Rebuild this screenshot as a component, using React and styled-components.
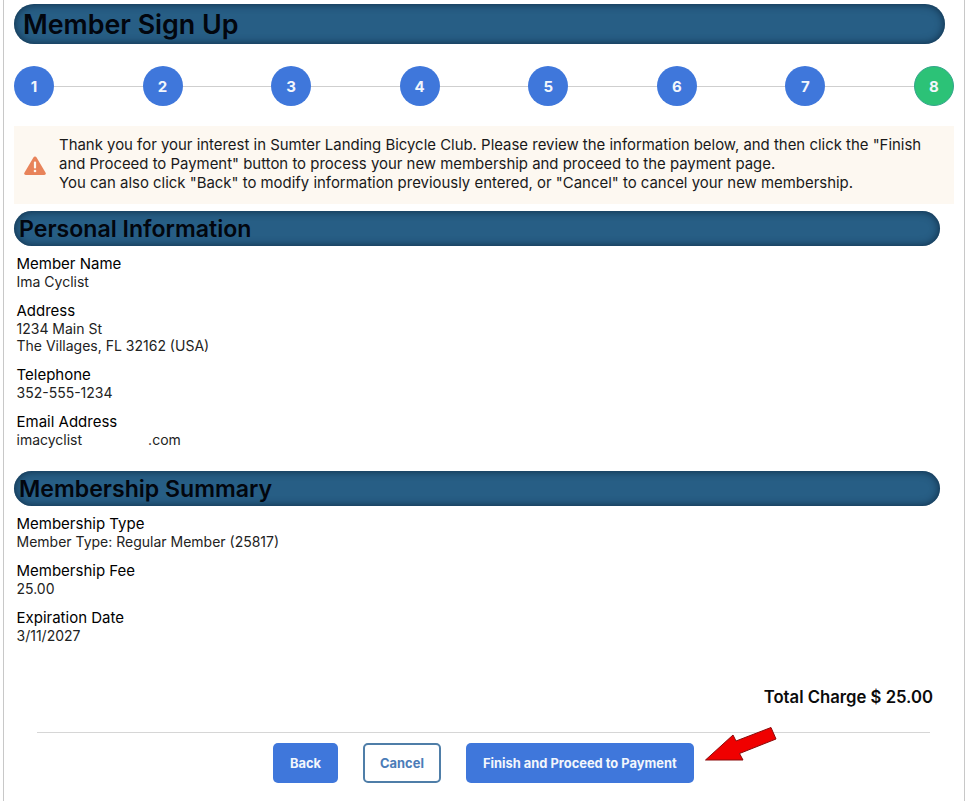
import React from 'react';
import styled, { createGlobalStyle } from 'styled-components';

const GlobalStyle = createGlobalStyle`
  html, body {
    margin: 0;
    padding: 0;
    background: #fff;
    overflow: hidden;
  }

  body {
    font-family: Inter, "Liberation Sans", sans-serif;
    color: #111;
  }
`;

const Frame = styled.div`
  position: relative;
  box-sizing: border-box;
  width: 962px;
  height: 801px;
  margin-left: 3px;
  padding: 4px 10px 0;
  border-left: 1px solid #c8c8c8;
  border-right: 1px solid #c8c8c8;
`;

const Banner = styled.div`
  box-sizing: border-box;
  display: flex;
  align-items: center;
  width: ${(p) => (p.$main ? '931px' : '926px')};
  height: ${(p) => (p.$main ? '40px' : '35px')};
  padding-left: ${(p) => (p.$main ? '9px' : '5px')};
  border-radius: 20px;
  background: #275e85;
  box-shadow: inset 0 0 9px rgba(5, 25, 45, 0.75);
  color: #02060e;
  font-size: ${(p) => (p.$main ? '26.8px' : '23.1px')};
  font-weight: 600;
  white-space: nowrap;
`;

const Steps = styled.div`
  display: flex;
  justify-content: space-between;
  width: 940px;
  margin-top: 22px;
  background: linear-gradient(#cfcfcf, #cfcfcf) center / 100% 1px no-repeat;
`;

const Step = styled.div`
  box-sizing: border-box;
  display: flex;
  align-items: center;
  justify-content: center;
  width: 40px;
  height: 40px;
  border-radius: 50%;
  background: ${(p) => (p.$done ? '#2cc277' : '#3f77db')};
  border: ${(p) => (p.$done ? '1px solid #35a58c' : 'none')};
  color: #f2f6fc;
  font-size: 15px;
  font-weight: 700;
`;

const Alert = styled.div`
  box-sizing: border-box;
  display: flex;
  align-items: center;
  gap: 13px;
  width: 940px;
  height: 78px;
  margin-top: 20px;
  padding-left: 10px;
  background: #fdf8f1;
  font-size: 14.93px;
  line-height: 19px;
  color: #1a1a1a;
  white-space: nowrap;
`;

const AlertText = styled.div`
  margin-bottom: 2px;
`;

const Section = styled.div`
  margin-top: ${(p) => p.$gap || 7}px;
`;

const Fields = styled.dl`
  display: flex;
  flex-direction: column;
  gap: 12px;
  margin: 9px 0 0 2.5px;
`;

const Field = styled.div`
  line-height: 17px;
`;

const Label = styled.dt`
  font-size: 15px;
  line-height: 18px;
  font-weight: 400;
  color: #000;
`;

const Value = styled.dd`
  margin: 0;
  font-size: 14px;
  color: #222;
`;

const Masked = styled.span`
  display: inline-block;
  width: 66px;
`;

const Total = styled.div`
  width: 919px;
  margin-top: 43px;
  text-align: right;
  font-size: 16.7px;
  line-height: 20px;
  font-weight: 600;
  color: #0b0b0b;
`;

const Rule = styled.hr`
  width: 893px;
  height: 1px;
  margin: 25px 0 0 23px;
  border: none;
  background: #d6d6d6;
`;

const Actions = styled.div`
  display: flex;
  gap: 25px;
  margin: 10px 0 0 259px;
`;

const Button = styled.button`
  box-sizing: border-box;
  height: 40px;
  padding: 0 ${(p) => (p.$outline ? '15px' : '17px')};
  border-radius: 5px;
  border: ${(p) => (p.$outline ? '2px solid #4f7ea8' : 'none')};
  background: ${(p) => (p.$outline ? '#fff' : '#3f77db')};
  color: ${(p) => (p.$outline ? '#4b7cb8' : '#f2f6fc')};
  font-family: inherit;
  font-size: 12.9px;
  font-weight: 700;
`;

const Arrow = styled.svg`
  position: absolute;
  left: 697px;
  top: 722px;
`;

const WarningIcon = () => (
  <svg width="22" height="19" viewBox="0 0 22 19" aria-hidden="true">
    <path
      d="M11 0.5c.7 0 1.2.3 1.6 1l9 15.2c.7 1.1-.1 2.3-1.4 2.3H1.8C.5 19-.3 17.800.4 16.700l9-15.200c.4-.7.9-1 1.600-1z"
      fill="#e8835a"
    />
    <rect x="9.900" y="5.500" width="2.200" height="7" rx="1" fill="#fdf8f1" />
    <circle cx="11" cy="15" r="1.300" fill="#fdf8f1" />
  </svg>
);

const steps = [1, 2, 3, 4, 5, 6, 7, 8];

const App = () => (
  <>
    <GlobalStyle />
    <Frame>
      <Banner $main>Member Sign Up</Banner>

      <Steps>
        {steps.map((n) => (
          <Step key={n} $done={n === 8}>
            {n}
          </Step>
        ))}
      </Steps>

      <Alert>
        <WarningIcon />
        <AlertText>
          Thank you for your interest in Sumter Landing Bicycle Club. Please
          review the information below, and then click the "Finish
          <br />
          and Proceed to Payment" button to process your new membership and
          proceed to the payment page.
          <br />
          You can also click "Back" to modify information previously entered,
          or "Cancel" to cancel your new membership.
        </AlertText>
      </Alert>

      <Section>
        <Banner>Personal Information</Banner>
        <Fields>
          <Field>
            <Label>Member Name</Label>
            <Value>Ima Cyclist</Value>
          </Field>
          <Field>
            <Label>Address</Label>
            <Value>1234 Main St</Value>
            <Value>The Villages, FL 32162 (USA)</Value>
          </Field>
          <Field>
            <Label>Telephone</Label>
            <Value>352-555-1234</Value>
          </Field>
          <Field>
            <Label>Email Address</Label>
            <Value>
              imacyclist
              <Masked />
              .com
            </Value>
          </Field>
        </Fields>
      </Section>

      <Section $gap={23}>
        <Banner>Membership Summary</Banner>
        <Fields>
          <Field>
            <Label>Membership Type</Label>
            <Value>Member Type: Regular Member (25817)</Value>
          </Field>
          <Field>
            <Label>Membership Fee</Label>
            <Value>25.00</Value>
          </Field>
          <Field>
            <Label>Expiration Date</Label>
            <Value>3/11/2027</Value>
          </Field>
        </Fields>
      </Section>

      <Total>Total Charge $ 25.00</Total>
      <Rule />

      <Actions>
        <Button>Back</Button>
        <Button $outline>Cancel</Button>
        <Button>Finish and Proceed to Payment</Button>
      </Actions>

      <Arrow width="82" height="42" viewBox="0 0 82 42" aria-hidden="true">
        <path
          d="M4.500 38 L32 13 L35 19 L70 5.500 L75 17 L38.500 31.500 L42 38 Z"
          fill="#f00000"
          stroke="#8a0a0a"
          strokeWidth="1"
          strokeLinejoin="round"
        />
      </Arrow>
    </Frame>
  </>
);

export default App;
